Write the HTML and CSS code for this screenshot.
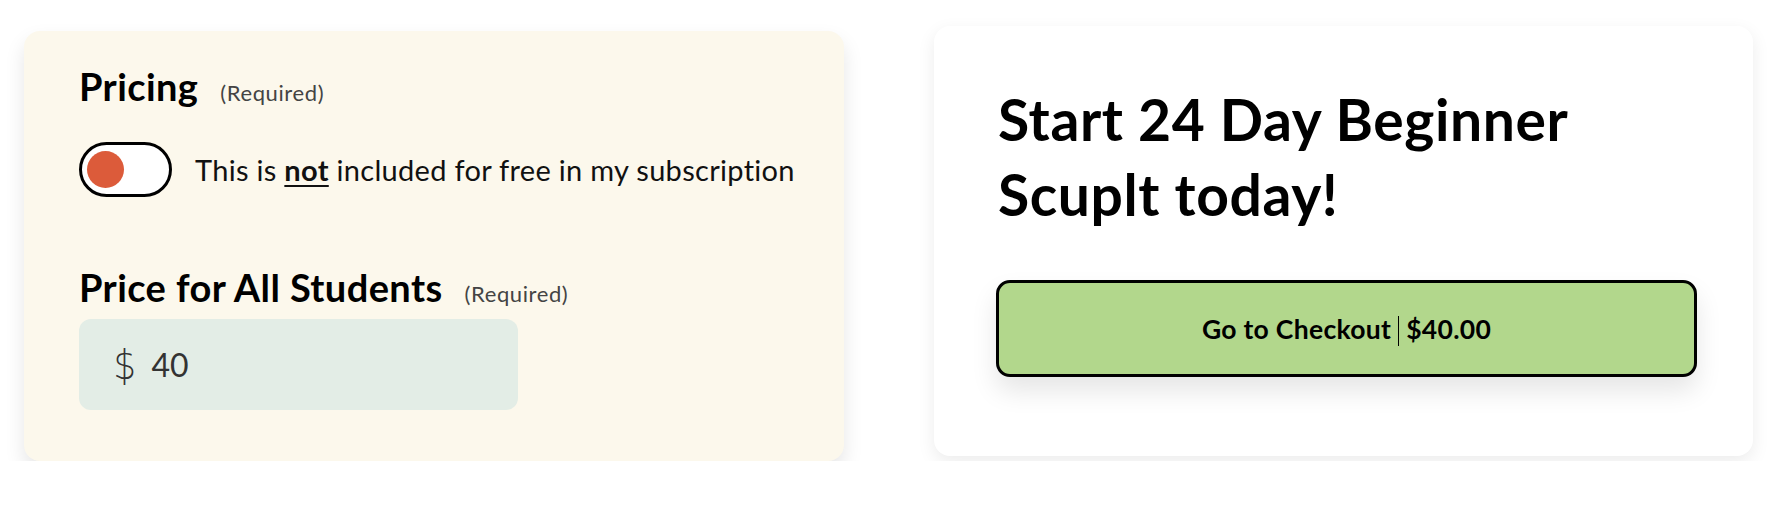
FILE: index.html
```html
<!DOCTYPE html>
<html lang="en">
<head>
<meta charset="utf-8">
<title>Pricing</title>
<link rel="stylesheet" href="styles.css">
</head>
<body>
<main class="page">
  <section class="card pricing-card">
    <div class="field-head">
      <h2 class="field-title">Pricing</h2>
      <span class="req">(Required)</span>
    </div>
    <div class="toggle-row">
      <div class="toggle" role="switch" aria-checked="false"><span class="knob"></span></div>
      <p class="toggle-label">This is <strong class="emph">not</strong> included for free in my subscription</p>
    </div>
    <div class="field-head second">
      <h2 class="field-title">Price for All Students</h2>
      <span class="req">(Required)</span>
    </div>
    <div class="price-input">
      <span class="currency">$</span>
      <span class="amount">40</span>
    </div>
  </section>

  <section class="card checkout-card">
    <h1 class="headline">Start 24 Day Beginner<br>Scuplt today!</h1>
    <button class="checkout-btn" type="button">Go to Checkout<span class="sep"></span>$40.00</button>
  </section>
</main>
</body>
</html>
```

FILE: styles.css
```css
* { box-sizing: border-box; }

html, body {
  margin: 0;
  padding: 0;
  background: #ffffff;
}

body {
  font-family: "Lato", "Noto Sans", sans-serif;
  color: #000;
}

.page {
  display: flex;
  align-items: flex-start;
  gap: 90px;
  padding: 26px 0 0 24px;
}

.card {
  width: 820px;
  height: 430px;
  border-radius: 16px;
}

.pricing-card {
  margin-top: 5px;
  background: #fcf8ec;
  box-shadow: 0 10px 20px rgba(0, 0, 0, 0.1);
  padding: 33px 16px 0 55px;
  display: flex;
  flex-direction: column;
}

.field-head {
  display: flex;
  align-items: baseline;
  gap: 22px;
}

.field-head.second {
  margin-top: 68px;
}

.field-title {
  margin: 0;
  font-size: 38px;
  line-height: 44px;
  font-weight: 700;
  letter-spacing: 0.4px;
}

.req {
  font-size: 22px;
  color: #444;
  font-weight: 400;
  letter-spacing: 0.6px;
}

.toggle-row {
  margin-top: 34px;
  display: flex;
  align-items: center;
  gap: 23px;
}

.toggle {
  width: 93px;
  height: 55px;
  border: 3.5px solid #000;
  border-radius: 28px;
  background: #fff;
  display: flex;
  align-items: center;
  padding-left: 4.5px;
  flex-shrink: 0;
}

.knob {
  width: 37px;
  height: 37px;
  border-radius: 50%;
  background: #dc5b3a;
}

.toggle-label {
  margin: 0;
  font-size: 29px;
  line-height: 34px;
  color: #111;
  letter-spacing: 0.3px;
  white-space: nowrap;
}

.emph {
  font-weight: 700;
  text-decoration: underline;
  text-underline-offset: 4px;
  text-decoration-thickness: 2px;
}

.price-input {
  margin-top: 10px;
  width: 439px;
  height: 91px;
  border-radius: 12px;
  background: #e3ede6;
  display: flex;
  align-items: center;
  gap: 14px;
  padding-left: 33px;
  color: #333;
}

.currency {
  font-family: "DejaVu Sans", sans-serif;
  font-weight: 200;
  font-size: 40px;
  line-height: 1;
  transform: scaleX(0.9);
}

.amount {
  font-size: 32px;
  line-height: 1;
}

.checkout-card {
  width: 819px;
  background: #fff;
  box-shadow: 0 6px 18px rgba(0, 0, 0, 0.08);
  padding: 56px 56px 0 62px;
  display: flex;
  flex-direction: column;
}

.headline {
  margin: 0 0 0 2px;
  font-size: 57px;
  line-height: 75px;
  font-weight: 700;
  letter-spacing: 0.6px;
}

.checkout-btn {
  margin-top: 48px;
  width: 701px;
  height: 97px;
  border: 3.5px solid #000;
  border-radius: 14px;
  background: #b2d78c;
  box-shadow: 0 14px 26px rgba(0, 0, 0, 0.1);
  font-family: "Lato", "Noto Sans", sans-serif;
  font-size: 26.5px;
  font-weight: 700;
  letter-spacing: 0.3px;
  color: #000;
  display: flex;
  align-items: center;
  justify-content: center;
  padding: 0;
  cursor: pointer;
}

.sep {
  display: inline-block;
  width: 0;
  height: 30px;
  border-left: 1.5px solid #000;
  margin: 4px 7px 0;
}
```
